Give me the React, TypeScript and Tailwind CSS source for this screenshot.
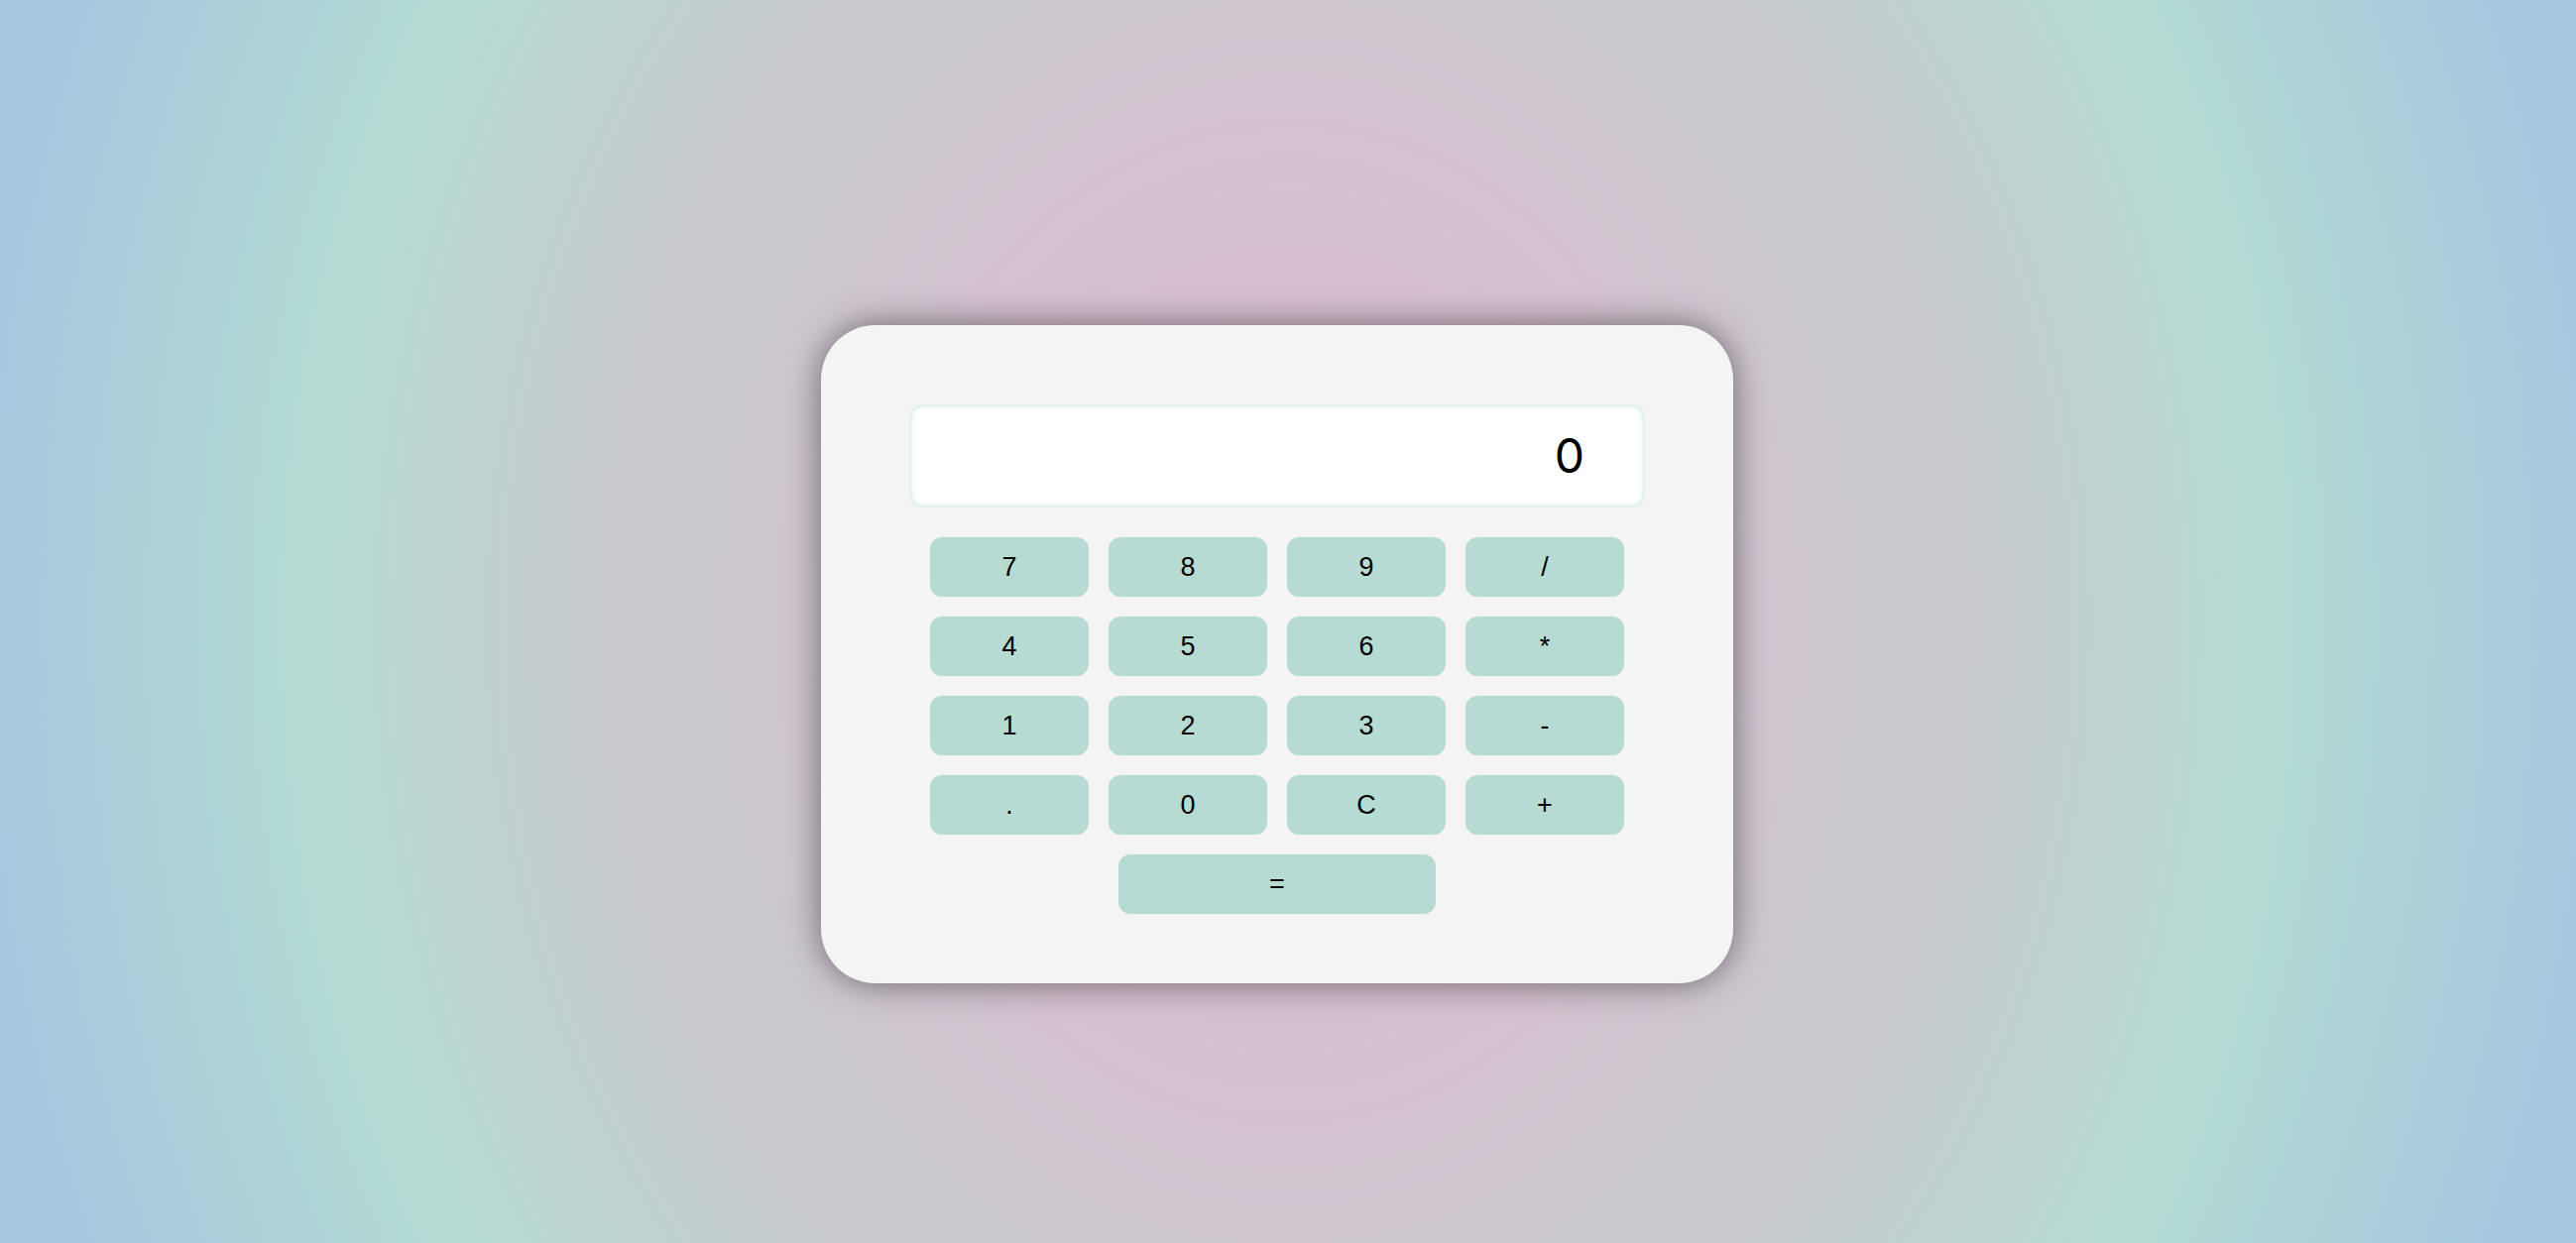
import React from "react";

const keys = ["7", "8", "9", "/", "4", "5", "6", "*", "1", "2", "3", "-", ".", "0", "C", "+"];

const Key = ({ label, wide }: { label: string; wide?: boolean }) => (
  <button
    className={`h-[60px] ${wide ? "w-[320px]" : "w-[160px]"} rounded-[12px] bg-[#b5dbd3] text-[27px] text-black flex items-center justify-center`}
    style={{ fontFamily: '"Liberation Sans", Arial, sans-serif' }}
  >
    {label}
  </button>
);

export default function App() {
  return (
    <div className="min-h-screen w-full flex items-center justify-center pt-[66px] pr-[22px] bg-[radial-gradient(ellipse_1400px_1700px_at_50%_50%,#ddbcd0_0%,#d8c0d0_22%,#cfc7d0_37%,#c8cbd0_50%,#b3dbd2_71%,#a4c6e1_97%)]">
      <div className="w-[920px] h-[664px] rounded-[55px] bg-[#f4f4f4] shadow-[0_0_34px_rgba(0,0,0,0.5)] flex flex-col items-center pt-[80px]">
        <div className="w-[742px] h-[104px] rounded-[14px] bg-white border-2 border-[#e2f0ee] shadow-[inset_0_0_4px_rgba(180,219,211,0.5)] flex items-center justify-end pr-[59px]">
          <span
            className="text-[48px] text-black leading-none"
            style={{ fontFamily: "Inter, sans-serif" }}
          >
            0
          </span>
        </div>

        <div className="grid grid-cols-[repeat(4,160px)] gap-[20px] mt-[30px]">
          {keys.map((k) => (
            <Key key={k} label={k} />
          ))}
        </div>

        <div className="mt-[20px]">
          <Key label="=" wide />
        </div>
      </div>
    </div>
  );
}
